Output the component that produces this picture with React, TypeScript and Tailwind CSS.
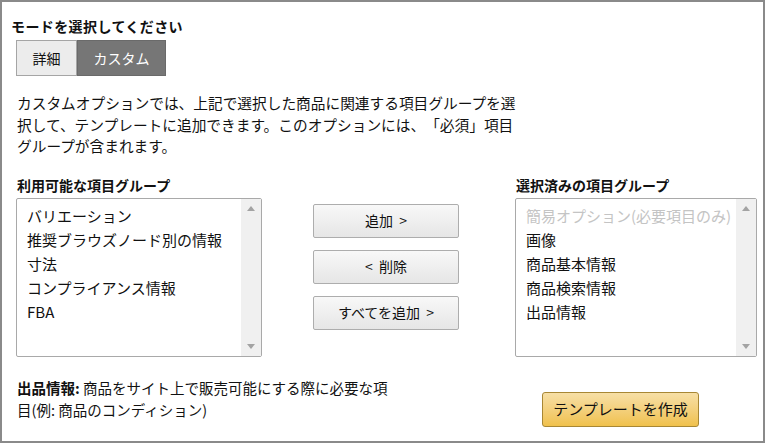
const font = { fontFamily: '"Noto Sans CJK JP", "Noto Sans", sans-serif' };

const available = ["バリエーション", "推奨ブラウズノード別の情報", "寸法", "コンプライアンス情報", "FBA"];
const selected = ["画像", "商品基本情報", "商品検索情報", "出品情報"];

function ListBox({ items, disabled, width }: { items: string[]; disabled?: string; width: string }) {
  return (
    <div className={`flex h-[159px] ${width} rounded-[2px] border border-[#a9a9a9] bg-white`}>
      <ul className="flex-1 pl-[10px] pt-[5px] text-[15px] leading-[24px] text-[#111]">
        {disabled && <li className="text-[#c4c4c4]">{disabled}</li>}
        {items.map((item) => (
          <li key={item}>{item}</li>
        ))}
      </ul>
      <div className="flex w-[20px] flex-col items-center justify-between bg-[#f0f0f0] py-[7px]">
        <svg width="8" height="5" viewBox="0 0 8 5">
          <path d="M0 5 L4 0 L8 5 Z" fill="#a3a3a3" />
        </svg>
        <svg width="8" height="5" viewBox="0 0 8 5">
          <path d="M0 0 L4 5 L8 0 Z" fill="#a3a3a3" />
        </svg>
      </div>
    </div>
  );
}

function MoveButton({ label }: { label: string }) {
  return (
    <button className="h-[34px] w-[146px] whitespace-pre rounded-[2px] border border-[#adadad] bg-gradient-to-b from-[#f8f8f8] to-[#e6e6e6] text-[14px] text-[#111]">
      {label}
    </button>
  );
}

export default function App() {
  return (
    <div style={font} className="flex h-[443px] w-[765px] flex-col border-2 border-[#8a8a8a] bg-white pl-[9px] pt-[14px] text-[#111] [text-spacing-trim:space-all]">
      <h1 className="text-[14px] font-bold leading-[20px] tracking-[0.4px]">モードを選択してください</h1>

      <div className="ml-[5px] mt-[4px] flex h-[36px] w-[150px] text-[14px]">
        <div className="flex w-[61px] items-center justify-center border border-[#a5a5a5] bg-[#ececec]">詳細</div>
        <div className="flex w-[89px] items-center justify-center border border-[#6a6a6a] bg-[#767676] text-white">カスタム</div>
      </div>

      <p className="ml-[6px] mt-[16px] w-[530px] text-[14.7px] leading-[21.5px]">
        カスタムオプションでは、上記で選択した商品に関連する項目グループを選
        <br />
        択して、テンプレートに追加できます。このオプションには、「必須」項目
        <br />
        グループが含まれます。
      </p>

      <div className="ml-[5px] mt-[18px] flex">
        <div className="flex flex-col">
          <h2 className="ml-[1px] text-[14px] font-bold leading-[20px]">利用可能な項目グループ</h2>
          <div className="mt-[3px]">
            <ListBox items={available} width="w-[246px]" />
          </div>
        </div>

        <div className="ml-[51px] mt-[29px] flex flex-col gap-[12px]">
          <MoveButton label="追加  >" />
          <MoveButton label="<  削除" />
          <MoveButton label="すべてを追加  >" />
        </div>

        <div className="ml-[56px] flex flex-col">
          <h2 className="ml-[1px] text-[14px] font-bold leading-[20px]">選択済みの項目グループ</h2>
          <div className="mt-[3px]">
            <ListBox items={selected} disabled="簡易オプション(必要項目のみ)" width="w-[242px]" />
          </div>
        </div>
      </div>

      <div className="ml-[6px] mt-[20px] flex items-start">
        <p className="w-[400px] text-[14.5px] leading-[22px]">
          <span className="font-bold">出品情報:</span> 商品をサイト上で販売可能にする際に必要な項
          <br />
          目(例: 商品のコンディション)
        </p>
        <button className="ml-[125px] mt-[15px] h-[35px] w-[157px] rounded-[3px] border border-[#a88734] bg-gradient-to-b from-[#f7dfa5] to-[#f0c14b] text-[15px] text-[#111]">
          テンプレートを作成
        </button>
      </div>
    </div>
  );
}
